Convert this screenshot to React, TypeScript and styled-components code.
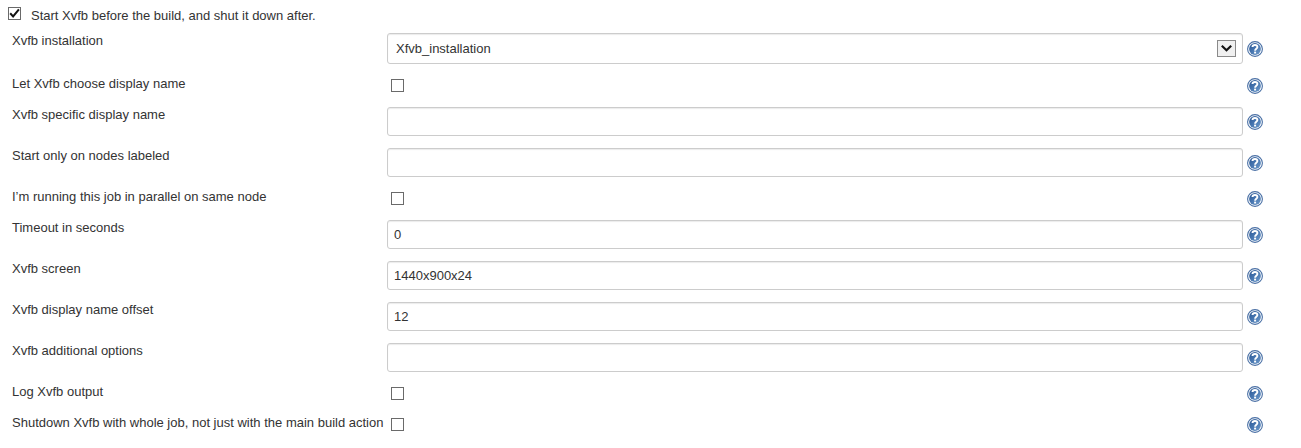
import React, { useId, useState } from "react";
import styled, { createGlobalStyle } from "styled-components";

const GlobalStyle = createGlobalStyle`
  *, *::before, *::after {
    box-sizing: border-box;
  }
  body {
    margin: 0;
    background: #fff;
    color: #333;
    font: 13px/16px "Liberation Sans", Arial, Helvetica, sans-serif;
  }
`;

const Form = styled.form`
  padding: 7px 38px 12px 8px;
`;

const Toggle = styled.label`
  display: flex;
  align-items: flex-start;
  gap: 10px;
  padding-bottom: 9px;
`;

const ToggleText = styled.span`
  line-height: 17px;
`;

const Settings = styled.div`
  display: flex;
  flex-direction: column;
  gap: 12px;
  padding-left: 4px;
`;

const Row = styled.div`
  display: grid;
  grid-template-columns: 375px minmax(0, 1fr) 16px;
`;

const Label = styled.label`
  white-space: nowrap;
`;

const Control = styled.div`
  position: relative;
  display: flex;
  align-items: center;
  min-height: 19px;
  margin-right: 4px;
`;

const TextInput = styled.input`
  width: 100%;
  height: 29px;
  padding: 0 6px;
  border: 1px solid #ccc;
  border-radius: 3px;
  background: #fff;
  box-shadow: inset 0 1px 1px rgba(0, 0, 0, 0.08);
  color: inherit;
  font: inherit;
`;

const Select = styled.select`
  appearance: none;
  width: 100%;
  height: 31px;
  padding: 0 32px 0 8px;
  border: 1px solid #ccc;
  border-radius: 3px;
  background: #fff;
  box-shadow: inset 0 1px 1px rgba(0, 0, 0, 0.08);
  color: inherit;
  font: inherit;
`;

const Arrow = styled.svg`
  position: absolute;
  top: 7px;
  right: 7px;
  pointer-events: none;
`;

const CheckBox = styled.span<{ $inset?: boolean }>`
  position: relative;
  display: block;
  width: 13px;
  height: 13px;
  margin-left: ${(p) => (p.$inset ? "4px" : "0")};
`;

const CheckInput = styled.input`
  appearance: none;
  display: block;
  width: 13px;
  height: 13px;
  margin: 0;
  border: 1px solid #6a6a6a;
  background: #fff;
`;

const Tick = styled.svg`
  position: absolute;
  inset: 0;
  pointer-events: none;
`;

const HelpButton = styled.button`
  align-self: center;
  width: 16px;
  height: 16px;
  padding: 0;
  border: 0;
  background: none;
  cursor: pointer;

  svg {
    display: block;
  }
`;

function Checkbox({ id, initial = false, inset }: { id: string; initial?: boolean; inset?: boolean }) {
  const [checked, setChecked] = useState(initial);
  return (
    <CheckBox $inset={inset}>
      <CheckInput id={id} type="checkbox" checked={checked} onChange={(e) => setChecked(e.target.checked)} />
      {checked && (
        <Tick width="13" height="13" viewBox="0 0 13 13" aria-hidden="true">
          <path d="M2.2 6.3 5.1 9.4 10.9 2.4" fill="none" stroke="#111" strokeWidth="2" />
        </Tick>
      )}
    </CheckBox>
  );
}

function Help({ topic }: { topic: string }) {
  const shade = useId();
  return (
    <HelpButton type="button" aria-label={`Help for ${topic}`}>
      <svg width="16" height="16" viewBox="0 0 16 16" aria-hidden="true">
        <defs>
          <linearGradient id={shade} x1="0" y1="0" x2="1" y2="1">
            <stop offset="0" stopColor="#2a5591" />
            <stop offset="0.45" stopColor="#4473ae" />
            <stop offset="1" stopColor="#6f9bcb" />
          </linearGradient>
        </defs>
        <circle cx="8" cy="8" r="7.4" fill="#fff" stroke="#4a70a5" strokeWidth="1.1" />
        <circle cx="8" cy="8" r="5.9" fill={`url(#${shade})`} />
        <path
          d="M5.5 6.1C5.5 3.2 10.4 3.3 10.4 6 10.4 7.7 8.1 7.8 8.1 9.7"
          fill="none"
          stroke="#fff"
          strokeWidth="1.9"
        />
        <rect x="7.1" y="10.6" width="2" height="1.9" fill="#fff" />
      </svg>
    </HelpButton>
  );
}

type Field = { label: string; kind: "select" | "check" | "text"; value?: string };

const fields: Field[] = [
  { label: "Xvfb installation", kind: "select", value: "Xfvb_installation" },
  { label: "Let Xvfb choose display name", kind: "check" },
  { label: "Xvfb specific display name", kind: "text" },
  { label: "Start only on nodes labeled", kind: "text" },
  { label: "I’m running this job in parallel on same node", kind: "check" },
  { label: "Timeout in seconds", kind: "text", value: "0" },
  { label: "Xvfb screen", kind: "text", value: "1440x900x24" },
  { label: "Xvfb display name offset", kind: "text", value: "12" },
  { label: "Xvfb additional options", kind: "text" },
  { label: "Log Xvfb output", kind: "check" },
  { label: "Shutdown Xvfb with whole job, not just with the main build action", kind: "check" },
];

function SettingRow({ label, kind, value = "" }: Field) {
  const id = useId();
  return (
    <Row>
      <Label htmlFor={id}>{label}</Label>
      <Control>
        {kind === "check" && <Checkbox id={id} inset />}
        {kind === "text" && <TextInput id={id} type="text" defaultValue={value} />}
        {kind === "select" && (
          <>
            <Select id={id} defaultValue={value}>
              <option>{value}</option>
            </Select>
            <Arrow width="19" height="17" viewBox="0 0 19 17" aria-hidden="true">
              <rect x="0.5" y="0.5" width="18" height="16" fill="#f0f0f0" stroke="#8a8a8a" />
              <path d="M4.8 5.8 9.5 10.2 14.2 5.8" fill="none" stroke="#111" strokeWidth="2.2" />
            </Arrow>
          </>
        )}
      </Control>
      <Help topic={label} />
    </Row>
  );
}

export default function App() {
  return (
    <>
      <GlobalStyle />
      <Form onSubmit={(e) => e.preventDefault()}>
        <Toggle htmlFor="start-xvfb">
          <Checkbox id="start-xvfb" initial />
          <ToggleText>Start Xvfb before the build, and shut it down after.</ToggleText>
        </Toggle>
        <Settings>
          {fields.map((field) => (
            <SettingRow key={field.label} {...field} />
          ))}
        </Settings>
      </Form>
    </>
  );
}
